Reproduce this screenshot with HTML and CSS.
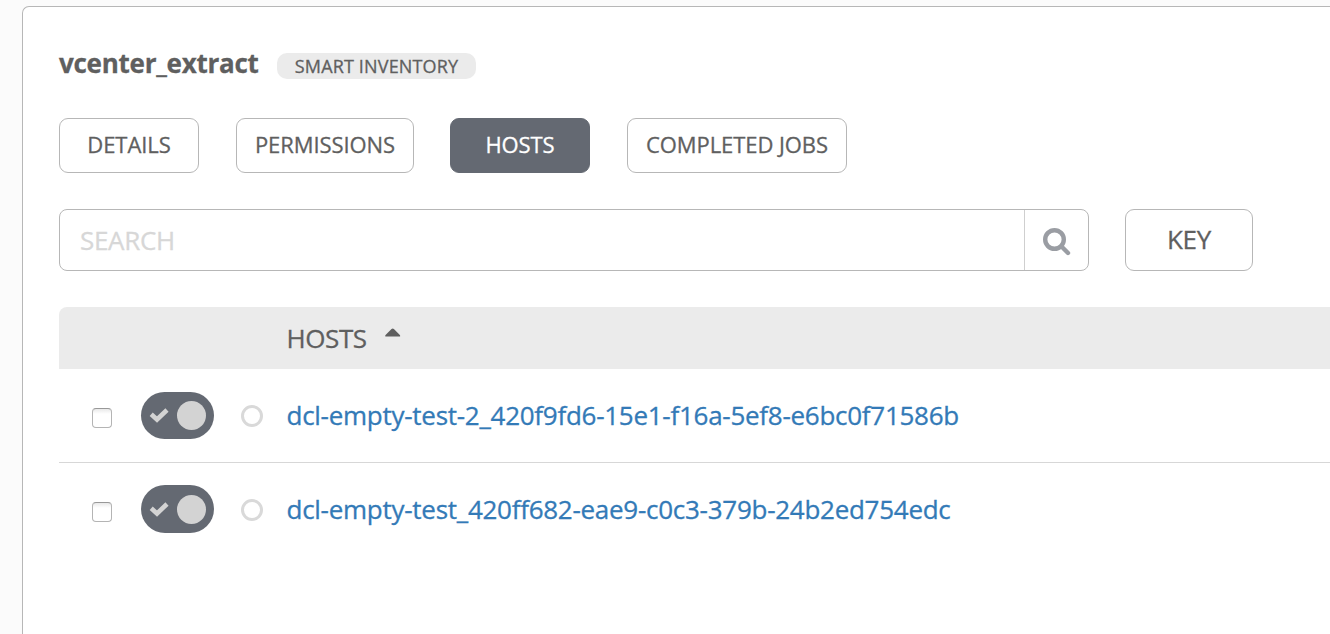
FILE: index.html
```html
<!DOCTYPE html>
<html lang="en">
<head>
<meta charset="utf-8">
<title>vcenter_extract</title>
<link rel="stylesheet" href="styles.css">
</head>
<body>
<main class="panel">
  <header class="panel-header">
    <h1 class="title">vcenter_extract</h1>
    <span class="badge">SMART INVENTORY</span>
  </header>
  <nav class="tabs">
    <button class="tab tab-details">DETAILS</button>
    <button class="tab tab-permissions">PERMISSIONS</button>
    <button class="tab tab-hosts active">HOSTS</button>
    <button class="tab tab-jobs">COMPLETED JOBS</button>
  </nav>
  <div class="search-row">
    <div class="search">
      <div class="search-input">SEARCH</div>
      <div class="search-button">
        <svg width="28" height="28" viewBox="0 0 28 28"><circle cx="11.5" cy="11.5" r="9.3" fill="none" stroke="#9a9da3" stroke-width="4.4"/><path d="M18.3 18.3L25 25" stroke="#9a9da3" stroke-width="4.4" stroke-linecap="round"/></svg>
      </div>
    </div>
    <button class="key">KEY</button>
  </div>
  <section class="list">
    <div class="list-head">
      <span class="head-label">HOSTS</span>
      <svg class="sort" width="16" height="9" viewBox="0 0 16 9"><path d="M0.3 7.2L6.5 1Q7.7 -0.2 8.9 1L15.1 7.2V8.4H0.3Z" fill="#5f5f5f"/></svg>
    </div>
    <div class="row">
      <span class="checkbox"></span>
      <span class="toggle"><svg class="check" width="20" height="16" viewBox="0 0 20 16"><path d="M2.2 7.3L8 12.5L18 3" fill="none" stroke="#d3d3d3" stroke-width="4.6"/></svg><span class="knob"></span></span>
      <span class="ring"></span>
      <a class="host">dcl-empty-test-2_420f9fd6-15e1-f16a-5ef8-e6bc0f71586b</a>
    </div>
    <div class="row row-last">
      <span class="checkbox"></span>
      <span class="toggle"><svg class="check" width="20" height="16" viewBox="0 0 20 16"><path d="M2.2 7.3L8 12.5L18 3" fill="none" stroke="#d3d3d3" stroke-width="4.6"/></svg><span class="knob"></span></span>
      <span class="ring"></span>
      <a class="host">dcl-empty-test_420ff682-eae9-c0c3-379b-24b2ed754edc</a>
    </div>
  </section>
</main>
</body>
</html>
```
FILE: styles.css
```css
* { box-sizing: border-box; }
body {
  margin: 0;
  height: 634px;
  padding: 6px 0 0 22px;
  overflow: hidden;
  background: #fbfbfb;
  color: #5f5f5f;
  font-family: "Open Sans", "Noto Sans", sans-serif;
  -webkit-text-stroke-width: 0.3px;
}
.panel {
  height: 628px;
  padding: 46px 0 0 36px;
  border: 1px solid #b7b7b7;
  border-right: 0;
  border-bottom: 0;
  border-radius: 7px 0 0 0;
  background: #fff;
}
.panel-header { display: flex; height: 65px; }
.title {
  width: 218px;
  margin: 0;
  font-size: 26px;
  line-height: 21px;
  font-weight: 700;
  letter-spacing: -0.27px;
  white-space: nowrap;
}
.badge {
  width: 199px;
  height: 26px;
  border-radius: 10px;
  background: #ebebeb;
  font-size: 18px;
  line-height: 26px;
  letter-spacing: 0.16px;
  text-align: center;
  white-space: nowrap;
}
button {
  padding: 0;
  border: 1px solid #b7b7b7;
  border-radius: 9px;
  background: #fff;
  color: #5f5f5f;
  font-family: inherit;
  -webkit-text-stroke-width: 0.3px;
  white-space: nowrap;
}
.tabs { display: flex; }
.tab {
  width: 140px;
  height: 55px;
  margin-right: 37px;
  padding-bottom: 3px;
  font-size: 22px;
  line-height: 50px;
  letter-spacing: -0.08px;
}
.tab-permissions { width: 178px; margin-right: 36px; }
.tab-jobs { width: 220px; }
.tab.active { border-color: #646972; background: #646972; color: #fff; }
.search-row { display: flex; gap: 36px; margin-top: 36px; }
.search {
  display: flex;
  width: 1030px;
  height: 62px;
  border: 1px solid #b7b7b7;
  border-radius: 8px;
}
.search-input {
  flex: 1;
  padding-left: 20px;
  color: #d7d7d7;
  font-size: 26px;
  line-height: 61px;
  letter-spacing: -0.3px;
}
.search-button {
  width: 64px;
  padding: 18px 0 0 18px;
  border-left: 1px solid #cfcfcf;
}
svg { display: block; }
.key {
  width: 128px;
  height: 62px;
  padding-bottom: 2px;
  font-size: 26px;
  line-height: 58px;
  letter-spacing: -0.3px;
}
.list { margin-top: 36px; }
.list-head {
  display: flex;
  height: 62px;
  padding-left: 227.5px;
  border-radius: 8px 0 0 0;
  background: #ebebeb;
  font-size: 26px;
  line-height: 62px;
  letter-spacing: -0.4px;
}
.head-label { width: 98.5px; }
.sort { margin-top: 21px; }
.row {
  display: flex;
  align-items: flex-start;
  height: 94px;
  padding-left: 33px;
  border-bottom: 1px solid #d7d7d7;
}
.row-last { height: 71px; border-bottom: 0; }
.checkbox {
  width: 20px;
  height: 20px;
  margin: 39px 29px 0 0;
  border: 1px solid #b4b4b4;
  border-top-color: #989898;
  border-radius: 4px;
  background: linear-gradient(#e9e9e9, #fff 5px);
}
.toggle {
  display: flex;
  width: 73px;
  height: 47px;
  margin: 23px 27px 0 0;
  padding: 9px 8px;
  border-radius: 24px;
  background: #646972;
}
.row-last .toggle { height: 48px; margin-top: 22px; padding-top: 10px; }
.check { margin: 6px 8px 0 0; }
.knob { width: 29px; height: 29px; border-radius: 50%; background: #d3d3d3; }
.ring {
  width: 22px;
  height: 22px;
  margin: 36px 23.5px 0 0;
  border: 3px solid #d9d9d9;
  border-radius: 50%;
}
.host {
  color: #337ab7;
  font-size: 26px;
  line-height: 92px;
  letter-spacing: -0.27px;
  white-space: nowrap;
}
.row-last .host { line-height: 36px; padding-top: 28px; }
```
